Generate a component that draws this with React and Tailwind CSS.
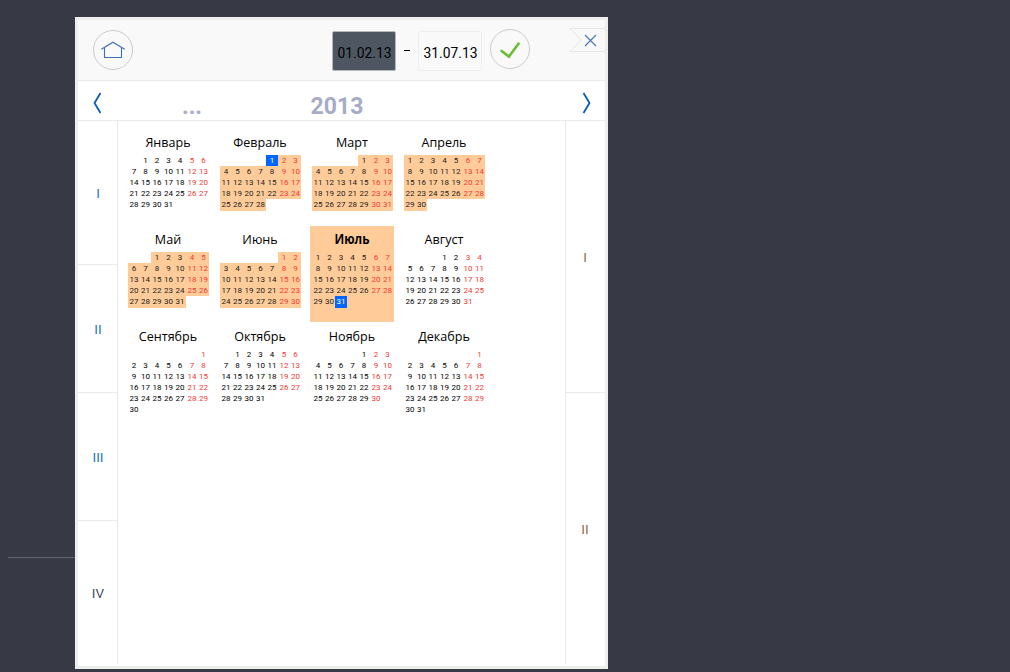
const MONTHS = [
  ['Январь', 1, 31], ['Февраль', 4, 28], ['Март', 4, 31], ['Апрель', 0, 30],
  ['Май', 2, 31], ['Июнь', 5, 30], ['Июль', 0, 31], ['Август', 3, 31],
  ['Сентябрь', 6, 30], ['Октябрь', 1, 31], ['Ноябрь', 4, 30], ['Декабрь', 6, 31],
];

function dayClass(month, day, column) {
  if ((month === 1 && day === 1) || (month === 6 && day === 31)) return 'bg-[#0066ff] text-white';
  const inRange = month >= 1 && month <= 6;
  const weekend = column > 4;
  if (inRange) return weekend ? 'bg-[#ffcc99] text-[#f23a30]' : 'bg-[#ffcc99] text-[#222]';
  return weekend ? 'text-[#f23a30]' : 'text-black';
}

function Month({ index, name, offset, length }) {
  const current = index === 6;
  const rows = offset + length > 35 ? 'auto-rows-[11px]' : 'grid-rows-[11px_11px_11px_11px_12px]';
  return (
    <section className={`h-24 w-[84px] px-[2px] ${current ? 'bg-[#ffcc99]' : ''}`}>
      <h3 className={`h-[26px] text-center text-[13.5px] leading-[26px] whitespace-nowrap text-black ${current ? 'scale-x-[0.87] font-bold' : 'scale-x-[0.93]'}`}>
        {name}
      </h3>
      <div className={`grid grid-cols-[12px_11px_12px_11px_12px_12px_11px] text-center font-['Roboto',sans-serif] text-[8px] leading-[11px] ${rows}`}>
        {Array.from({ length: offset }, (_, i) => <span key={`e${i}`} />)}
        {Array.from({ length }, (_, i) => (
          <span key={i} className={dayClass(index, i + 1, (offset + i) % 7)}>{i + 1}</span>
        ))}
      </div>
    </section>
  );
}

function Header() {
  return (
    <header className="flex h-[61px] shrink-0 border-b border-[#eaeaea] bg-[#f9f9f9] font-['Roboto',sans-serif] text-black">
      <button className="mt-[10px] ml-[15px] flex size-10 items-center justify-center rounded-full border border-[#ccc]">
        <svg width="26" height="20" viewBox="0 0 26 20" fill="none" stroke="#3f6fb5" strokeWidth="1.1">
          <path d="M1.3 9.3 13 2.2 24.7 9.3M4.5 8V17.5H21.5V8" />
        </svg>
      </button>
      <div className="mt-[11px] ml-[199px] h-10 w-16 rounded-[2px] border border-[#b5b8bb] bg-[#4e5761] pl-px text-center text-[13.8px] leading-[43px]">01.02.13</div>
      <span className="mt-[30px] ml-2 h-px w-[6px] bg-black" />
      <div className="mt-[11px] ml-2 h-10 w-16 rounded-[3px] border border-[#eee] pl-px text-center text-[13.8px] leading-[43px]">31.07.13</div>
      <button className="mt-[9px] ml-2 flex size-10 items-center justify-center rounded-full border border-[#ccc]">
        <svg width="24" height="20" viewBox="0 0 24 20" fill="none" stroke="#6bbd35" strokeWidth="2.6">
          <path d="M2.7 11.2 10.9 17.6 21.2 3.8" />
        </svg>
      </button>
      <svg className="mt-2 ml-[39px]" width="36" height="25" viewBox="0 0 36 25" fill="none">
        <path d="M36 .5H.8L12.5 12 .8 23.5H36" stroke="#e5e5e5" />
        <path d="M16 7 27 18M27 7 16 18" stroke="#4f76b8" strokeWidth="1.2" />
      </svg>
    </header>
  );
}

export default function App() {
  return (
    <main className="flex h-[672px] w-[1010px] overflow-hidden bg-[#373944] font-['Open_Sans','Noto_Sans',sans-serif]">
      <div className="mt-[557px] ml-2 h-px w-[67px] bg-[#65676d]" />
      <div className="mt-[17px] flex h-[652px] w-[533px] flex-col border-[3px] border-[#eee] bg-white">
        <Header />
        <nav className="flex h-10 shrink-0 border-b border-[#eaeaea] font-['Roboto',sans-serif] text-[23px] leading-[51px] font-bold text-[#a7abc8]">
          <svg className="mt-[10px] ml-[13px]" width="14" height="24" viewBox="0 0 14 24" fill="none" stroke="#0b5cb5" strokeWidth="1.8">
            <path d="M9.5 2 3.5 12 9.5 22" />
          </svg>
          <span className="ml-[76px] w-[22px] text-center">...</span>
          <span className="ml-[107px] w-[54px] text-center">2013</span>
          <svg className="mt-[10px] ml-[215px]" width="14" height="24" viewBox="0 0 14 24" fill="none" stroke="#0b5cb5" strokeWidth="1.8">
            <path d="M4.5 2 10.5 12 4.5 22" />
          </svg>
        </nav>
        <div className="flex h-[543px] shrink-0 font-['Roboto',sans-serif] text-[13.5px]">
          <aside className="grid w-10 grid-rows-[144px_128px_128px_143px] border-r border-[#eaeaea] text-[#2b78ad]">
            <div className="flex items-center justify-center border-b border-[#eaeaea] pt-px pl-px">I</div>
            <div className="flex items-center justify-center border-b border-[#eaeaea] pt-px pl-px">II</div>
            <div className="flex items-center justify-center border-b border-[#eaeaea] pt-px pl-px">III</div>
            <div className="flex items-center justify-center pt-px pl-px text-[#42516b]">IV</div>
          </aside>
          <div className="grid w-[447px] auto-rows-[97px] grid-cols-[92px_92px_92px_92px] content-start pt-2 pl-2 font-['Open_Sans','Noto_Sans',sans-serif]">
            {MONTHS.map(([name, offset, length], index) => (
              <Month key={name} index={index} name={name} offset={offset} length={length} />
            ))}
          </div>
          <aside className="grid w-10 grid-rows-[272px_271px] border-l border-[#eaeaea] text-[#946b48]">
            <div className="flex items-center justify-center border-b border-[#eaeaea] pt-px pr-px">I</div>
            <div className="flex items-center justify-center pt-px pr-px">II</div>
          </aside>
        </div>
      </div>
    </main>
  );
}
